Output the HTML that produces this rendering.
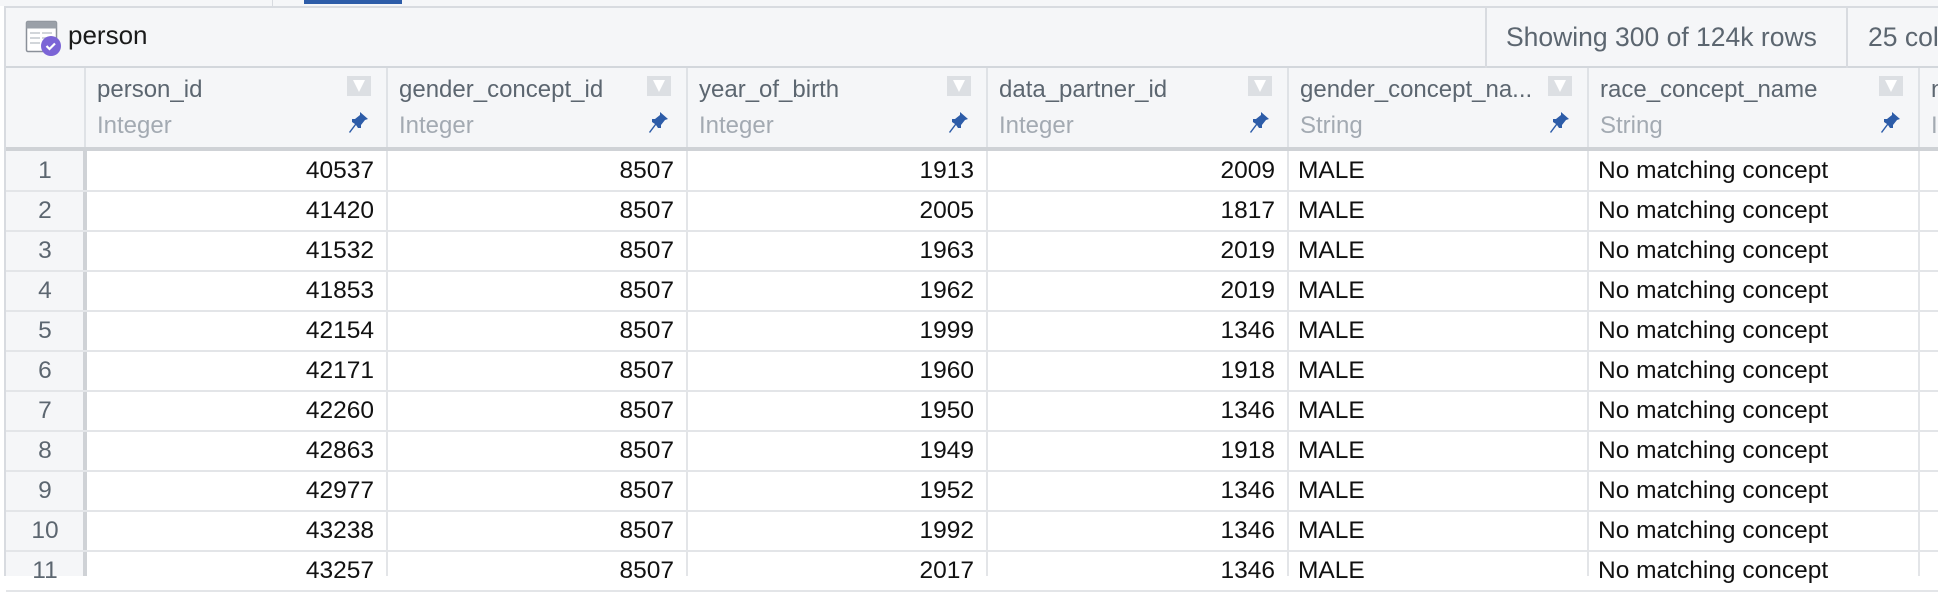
<!DOCTYPE html>
<html><head><meta charset="utf-8"><style>
*{margin:0;padding:0;box-sizing:border-box}
body{width:1938px;height:576px;overflow:hidden;background:#fff;font-family:"Liberation Sans",sans-serif;position:relative}
.abs{position:absolute}
.hdr{left:5px;top:6px;width:1933px;height:62px;background:#f5f6f8;border-top:2px solid #d8dbe0;border-bottom:2px solid #d3d7dc}
.colh{top:68px;height:80px;background:#f5f6f8}
.cname{position:absolute;top:8px;left:11px;font-size:24px;color:#5c6670;white-space:nowrap}
.ctype{position:absolute;top:44px;left:11px;font-size:24px;color:#a3aab2}
.cell{position:absolute;font-size:24.5px;color:#111;line-height:40px;white-space:nowrap}
</style></head><body>
<div class="abs" style="left:0;top:0;width:1938px;height:6px;background:#f5f6f8"></div>
<div class="abs" style="left:304px;top:0;width:98px;height:4px;background:#2d5ca8"></div>
<div class="abs" style="left:272px;top:0;width:1px;height:6px;background:#d8dbe0"></div>
<div class="abs hdr"></div>
<div class="abs" style="left:4px;top:6px;width:2px;height:570px;background:#d8dbe0"></div>
<svg class="abs" style="left:24px;top:19px" width="40" height="40" viewBox="0 0 40 40">
<rect x="2.5" y="2.5" width="30" height="30" rx="1.5" fill="#fff" stroke="#8a9099" stroke-width="1.5"/>
<rect x="2.5" y="2.5" width="30" height="7" fill="#9aa0a8"/>
<path d="M6 14h10M6 19h10M6 24h10M18 14h10M18 19h8" stroke="#c4c8cd" stroke-width="1.5"/>
<circle cx="27" cy="27" r="10" fill="#7b64d6"/>
<path d="M22.5 27l3 3 5.5-5.5" stroke="#fff" stroke-width="2.2" fill="none"/>
</svg>
<div class="abs" style="left:68px;top:20px;font-size:26px;color:#1a1a1a">person</div>
<div class="abs" style="left:1485px;top:8px;width:2px;height:60px;background:#d8dbe0"></div>
<div class="abs" style="left:1846px;top:8px;width:2px;height:60px;background:#d8dbe0"></div>
<div class="abs" style="left:1506px;top:22px;font-size:26.5px;color:#5c6670;white-space:nowrap">Showing 300 of 124k rows</div>
<div class="abs" style="left:1868px;top:22px;font-size:26.5px;color:#5c6670;white-space:nowrap">25 col</div>

<div class="abs colh" style="left:6px;width:1932px"></div>
<div id="cols"></div>
<div class="abs" style="left:6px;top:147px;width:1932px;height:4px;background:#cfd2d6"></div>
<div class="abs" style="left:6px;top:151px;width:78px;height:425px;background:#f5f6f8"></div>
<div class="abs" style="left:83px;top:147px;width:4px;height:429px;background:#cfd2d6"></div>
<div id="rows"></div>
<script>
var b=[84,386,686,986,1287,1587,1918,1938];
var names=["person_id","gender_concept_id","year_of_birth","data_partner_id","gender_concept_na...","race_concept_name","n"];
var types=["Integer","Integer","Integer","Integer","String","String","In"];
var h="";
for(var i=0;i<7;i++){
 var l=b[i],w=b[i+1]-b[i];
 h+='<div class="abs colh" style="left:'+l+'px;width:'+w+'px;border-left:2px solid #dfe2e6"><div class="cname">'+names[i]+'</div><div class="ctype">'+types[i]+'</div>';
 if(i<6){
 h+='<svg style="position:absolute;left:'+(w-41)+'px;top:8px" width="24" height="20"><rect width="24" height="20" fill="#dcdfe3"/><path d="M6 4h12l-6 12z" fill="#fff"/></svg>';
 h+='<svg style="position:absolute;left:'+(w-40)+'px;top:42px" width="22" height="24" viewBox="0 0 22 24"><path d="M12 2l8 7-3 1-4 5 0 3-3 0-2-3-6 8-1-1 6-8-3-2 0-3 3 0 5-4z" fill="#2d5ca8"/></svg>';
 }
 h+='</div>';
}
document.getElementById('cols').innerHTML=h;
var d=[[40537,1913,2009],[41420,2005,1817],[41532,1963,2019],[41853,1962,2019],[42154,1999,1346],[42171,1960,1918],[42260,1950,1346],[42863,1949,1918],[42977,1952,1346],[43238,1992,1346],[43257,2017,1346]];
var r="";
for(var k=0;k<11;k++){
 var t=151+k*40;
 r+='<div class="abs" style="left:6px;top:'+(t+39)+'px;width:1932px;height:2px;background:#e3e5e8"></div>';
 r+='<div class="cell" style="left:6px;width:78px;top:'+t+'px;text-align:center;color:#5c6670">'+(k+1)+'</div>';
 var vals=[d[k][0],8507,d[k][1],d[k][2]];
 for(var i=0;i<4;i++) r+='<div class="cell" style="left:'+b[i]+'px;width:'+(b[i+1]-b[i]-12)+'px;top:'+t+'px;text-align:right">'+vals[i]+'</div>';
 r+='<div class="cell" style="left:'+(b[4]+11)+'px;top:'+t+'px">MALE</div>';
 r+='<div class="cell" style="left:'+(b[5]+11)+'px;top:'+t+'px">No matching concept</div>';
}
for(var i=1;i<7;i++) r+='<div class="abs" style="left:'+b[i]+'px;top:151px;width:2px;height:425px;background:#e3e5e8"></div>';
document.getElementById('rows').innerHTML=r;
</script>
</body></html>
